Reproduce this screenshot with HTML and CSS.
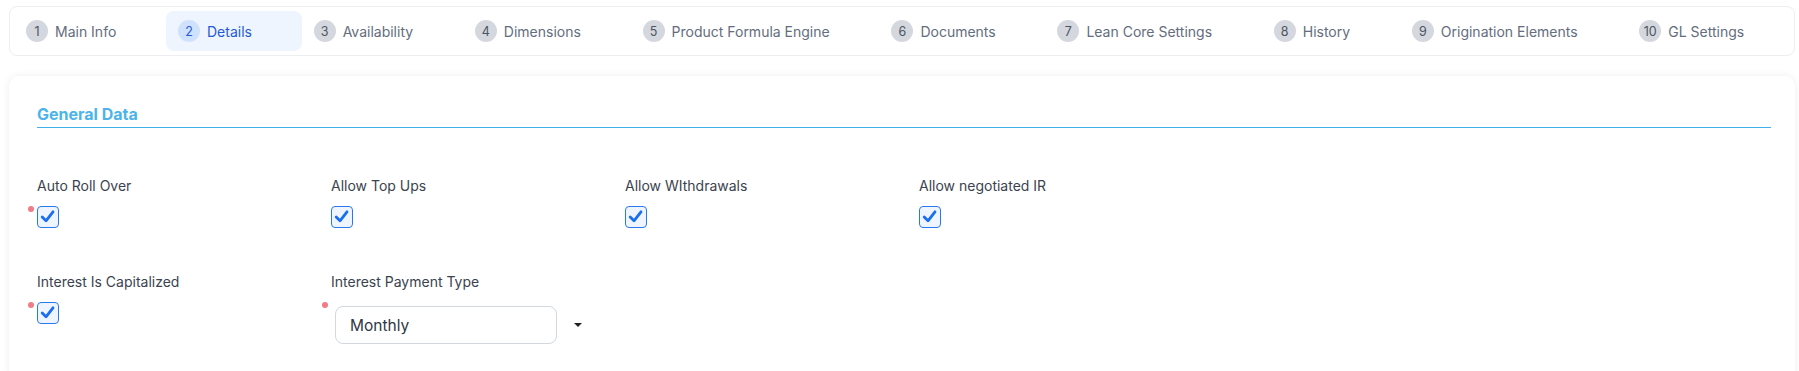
FILE: index.html
```html
<!DOCTYPE html>
<html lang="en">
<head>
  <meta charset="UTF-8">
  <meta name="viewport" content="width=device-width, initial-scale=1.0">
  <title>Product Details</title>
  <link rel="stylesheet" href="styles.css">
</head>
<body>
  <div class="page">
    <nav class="tabs">
      <div class="tab"><span class="num">1</span>Main Info</div>
      <div class="tab active"><span class="num">2</span>Details</div>
      <div class="tab"><span class="num">3</span>Availability</div>
      <div class="tab"><span class="num">4</span>Dimensions</div>
      <div class="tab"><span class="num">5</span>Product Formula Engine</div>
      <div class="tab"><span class="num">6</span>Documents</div>
      <div class="tab"><span class="num">7</span>Lean Core Settings</div>
      <div class="tab"><span class="num">8</span>History</div>
      <div class="tab"><span class="num">9</span>Origination Elements</div>
      <div class="tab"><span class="num">10</span>GL Settings</div>
    </nav>

    <div class="card">
      <h2 class="section-title">General Data</h2>

      <div class="form-grid">
        <div class="field">
          <label>Auto Roll Over</label>
          <div class="control required">
            <span class="checkbox"><svg viewBox="0 0 19 19"><path d="M4.2 10 L8 13.8 L15 4.8"/></svg></span>
          </div>
        </div>
        <div class="field">
          <label>Allow Top Ups</label>
          <div class="control">
            <span class="checkbox"><svg viewBox="0 0 19 19"><path d="M4.2 10 L8 13.8 L15 4.8"/></svg></span>
          </div>
        </div>
        <div class="field">
          <label>Allow WIthdrawals</label>
          <div class="control">
            <span class="checkbox"><svg viewBox="0 0 19 19"><path d="M4.2 10 L8 13.8 L15 4.8"/></svg></span>
          </div>
        </div>
        <div class="field">
          <label>Allow negotiated IR</label>
          <div class="control">
            <span class="checkbox"><svg viewBox="0 0 19 19"><path d="M4.2 10 L8 13.8 L15 4.8"/></svg></span>
          </div>
        </div>
        <div class="field row-start">
          <label>Interest Is Capitalized</label>
          <div class="control required">
            <span class="checkbox"><svg viewBox="0 0 19 19"><path d="M4.2 10 L8 13.8 L15 4.8"/></svg></span>
          </div>
        </div>
        <div class="field">
          <label>Interest Payment Type</label>
          <div class="control required">
            <div class="select-wrap">
              <div class="select">Monthly</div>
              <span class="caret"></span>
            </div>
          </div>
        </div>
      </div>
    </div>
  </div>
</body>
</html>
```

FILE: styles.css
```css
body {
  margin: 0;
  font-family: Inter, 'Noto Sans', sans-serif;
  background-color: #fff;
  color: #374151;
}
.page {
  padding: 6px 4px 0 9px;
}
.tabs {
  display: flex;
  border: 1px solid #eceef1;
  border-radius: 8px;
  padding: 4px;
}
.tab {
  display: flex;
  align-items: center;
  height: 40px;
  padding: 0 49.7px 0 12px;
  border-radius: 8px;
  font-size: 14px;
  color: #636d7e;
  white-space: nowrap;
}
.tab .num {
  width: 22px;
  height: 22px;
  border-radius: 50%;
  background-color: #d4d7dd;
  color: #4b5563;
  font-size: 12.5px;
  display: flex;
  align-items: center;
  justify-content: center;
  margin-right: 7px;
}
.tab.active {
  background-color: #eef5ff;
  color: #1f5bd6;
}
.tab.active .num {
  background-color: #cfe1fc;
  color: #1f5bd6;
}
.card {
  margin-top: 20px;
  border-radius: 10px;
  box-shadow: 0 0 8px rgba(0, 0, 0, 0.07);
  padding: 28px 24px 40px 28px;
  background-color: #fff;
}
.section-title {
  margin: 0;
  font-size: 16px;
  line-height: 20px;
  font-weight: 700;
  color: #4cb4e9;
  padding-bottom: 3px;
  border-bottom: 1.5px solid #3fb0e8;
}
.form-grid {
  display: grid;
  grid-template-columns: repeat(6, 294px);
  row-gap: 44px;
  margin-top: 48px;
}
.row-start {
  grid-column: 1;
}
.field label {
  display: block;
  font-size: 14px;
  line-height: 20px;
  color: #3b4350;
}
.control {
  position: relative;
  margin-top: 10px;
}
.control.required::before {
  content: "";
  position: absolute;
  left: -9px;
  top: 0;
  width: 6px;
  height: 6px;
  border-radius: 50%;
  background-color: #f27b88;
}
.checkbox {
  display: block;
  width: 22px;
  height: 22px;
  box-sizing: border-box;
  border: 1.5px solid #2a78f0;
  border-radius: 4px;
  background-color: #eef5ff;
}
.checkbox svg {
  display: block;
  width: 19px;
  height: 19px;
}
.checkbox path {
  fill: none;
  stroke: #1a6ef0;
  stroke-width: 2.8;
  stroke-linecap: round;
  stroke-linejoin: round;
}
.select-wrap {
  display: flex;
  align-items: center;
  padding: 4px 0 0 4px;
}
.select {
  width: 222px;
  height: 38px;
  box-sizing: border-box;
  border: 1px solid #d3d7de;
  border-radius: 8px;
  padding: 0 14px;
  display: flex;
  align-items: center;
  font-size: 15.5px;
  color: #2f3744;
}
.caret {
  width: 0;
  height: 0;
  border-left: 4px solid transparent;
  border-right: 4px solid transparent;
  border-top: 4px solid #222;
  margin-left: 17px;
}
```
